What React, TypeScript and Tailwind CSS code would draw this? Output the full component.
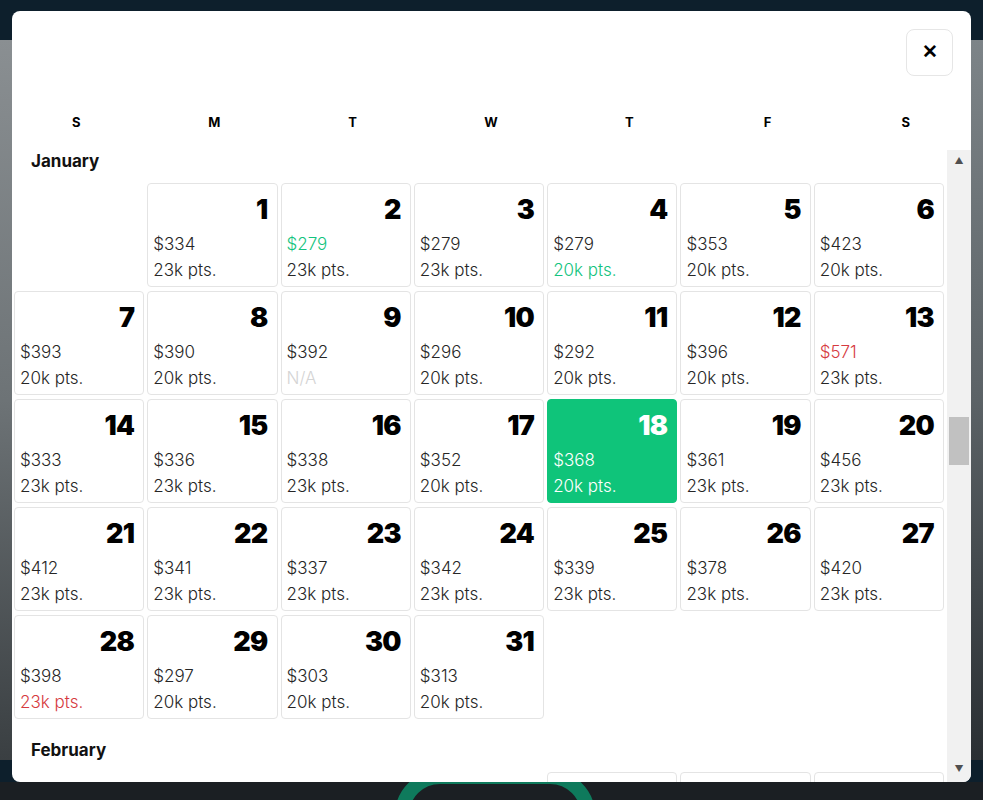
import React from "react";

type Day = {
  d: number;
  price: string;
  pts: string;
  priceTone?: "green" | "red";
  ptsTone?: "green" | "red" | "na";
  selected?: boolean;
};

const WEEKDAYS = ["S", "M", "T", "W", "T", "F", "S"];

const JANUARY: Day[] = [
  { d: 1, price: "$334", pts: "23k pts." },
  { d: 2, price: "$279", pts: "23k pts.", priceTone: "green" },
  { d: 3, price: "$279", pts: "23k pts." },
  { d: 4, price: "$279", pts: "20k pts.", ptsTone: "green" },
  { d: 5, price: "$353", pts: "20k pts." },
  { d: 6, price: "$423", pts: "20k pts." },
  { d: 7, price: "$393", pts: "20k pts." },
  { d: 8, price: "$390", pts: "20k pts." },
  { d: 9, price: "$392", pts: "N/A", ptsTone: "na" },
  { d: 10, price: "$296", pts: "20k pts." },
  { d: 11, price: "$292", pts: "20k pts." },
  { d: 12, price: "$396", pts: "20k pts." },
  { d: 13, price: "$571", pts: "23k pts.", priceTone: "red" },
  { d: 14, price: "$333", pts: "23k pts." },
  { d: 15, price: "$336", pts: "23k pts." },
  { d: 16, price: "$338", pts: "23k pts." },
  { d: 17, price: "$352", pts: "20k pts." },
  { d: 18, price: "$368", pts: "20k pts.", selected: true },
  { d: 19, price: "$361", pts: "23k pts." },
  { d: 20, price: "$456", pts: "23k pts." },
  { d: 21, price: "$412", pts: "23k pts." },
  { d: 22, price: "$341", pts: "23k pts." },
  { d: 23, price: "$337", pts: "23k pts." },
  { d: 24, price: "$342", pts: "23k pts." },
  { d: 25, price: "$339", pts: "23k pts." },
  { d: 26, price: "$378", pts: "23k pts." },
  { d: 27, price: "$420", pts: "23k pts." },
  { d: 28, price: "$398", pts: "23k pts.", ptsTone: "red" },
  { d: 29, price: "$297", pts: "20k pts." },
  { d: 30, price: "$303", pts: "20k pts." },
  { d: 31, price: "$313", pts: "20k pts." },
];

const TONE: Record<string, string> = {
  green: "text-[#13c37e]",
  red: "text-[#d63a40]",
  na: "text-[#d4d4d4]",
};

function DayCell({ day }: { day: Day }) {
  const base = day.selected
    ? "bg-[#0fc47a] border-[#0fc47a] text-white"
    : "bg-white border-[#e4e4e4] text-[#262626]";
  return (
    <div className={`h-[104px] rounded-[4px] border px-[5px] pt-[11px] ${base}`}>
      <div
        className={`pr-[4px] text-right text-[27px] font-black leading-[30px] tracking-tight ${
          day.selected ? "text-white" : "text-black"
        }`}
      >
        {day.d}
      </div>
      <div
        className={`mt-[6px] text-[17px] font-light leading-[26px] ${
          !day.selected && day.priceTone ? TONE[day.priceTone] : ""
        }`}
      >
        {day.price}
      </div>
      <div
        className={`text-[17px] font-light leading-[26px] ${
          !day.selected && day.ptsTone ? TONE[day.ptsTone] : ""
        }`}
      >
        {day.pts}
      </div>
    </div>
  );
}

function FakeScrollbar() {
  return (
    <div className="flex w-[24px] shrink-0 flex-col items-center bg-[#f1f1f1]">
      <span className="mt-[4px] text-[9px] leading-[14px] text-[#505050]">▲</span>
      <div className="mt-[249px] h-[48px] w-[20px] bg-[#c1c1c1]" />
      <div className="flex-1" />
      <span className="mb-[6px] text-[9px] leading-[14px] text-[#505050]">▼</span>
    </div>
  );
}

export default function App() {
  const lead = 1; // January starts on Monday
  return (
    <div
      className="relative h-[800px] w-[983px] overflow-hidden bg-[#0d1f2c] pt-[11px] pl-[12px]"
      style={{ fontFamily: "Inter, 'Noto Sans', sans-serif" }}
    >
      {/* backdrop bits */}
      <div className="pointer-events-none absolute left-0 top-[40px] h-[720px] w-[12px] bg-gradient-to-b from-[#8a8f92] via-[#6d7376] to-[#3a3f42]" />
      <div className="pointer-events-none absolute right-0 top-[40px] h-[720px] w-[12px] bg-gradient-to-b from-[#7d8488] via-[#5b6266] to-[#2a2f33]" />
      <div className="pointer-events-none absolute bottom-0 left-0 h-[18px] w-full bg-[#1b1f23]" />
      <div className="pointer-events-none absolute left-[395px] top-[770px] h-[90px] w-[200px] rounded-full border-[14px] border-[#0e7a5c]" />

      <div className="relative flex h-[771px] w-[959px] flex-col overflow-hidden rounded-[8px] bg-white">
        <div className="flex justify-end pr-[18px] pt-[18px]">
          <button
            type="button"
            className="flex h-[47px] w-[47px] items-center justify-center rounded-[8px] border border-[#e6e6e6] bg-white text-[19px] font-black text-black"
          >
            ✕
          </button>
        </div>

        <div className="-ml-[5px] mt-[36px] grid w-[968px] grid-cols-7">
          {WEEKDAYS.map((w, i) => (
            <div key={i} className="text-center text-[13px] font-bold leading-[20px] text-black">
              {w}
            </div>
          ))}
        </div>

        <div className="mt-[18px] flex min-h-0 flex-1">
          <div className="min-w-0 flex-1 overflow-hidden pl-[2px] pr-[3px]">
            <h2 className="pl-[17px] text-[17px] font-bold leading-[22px] text-[#111]">January</h2>
            <div className="mt-[11px] grid grid-cols-7 gap-x-[3px] gap-y-[4px]">
              {Array.from({ length: lead }).map((_, i) => (
                <div key={`e${i}`} />
              ))}
              {JANUARY.map((day) => (
                <DayCell key={day.d} day={day} />
              ))}
            </div>
            <h2 className="mt-[20px] pl-[17px] text-[17px] font-bold leading-[22px] text-[#111]">
              February
            </h2>
            <div className="mt-[11px] grid grid-cols-7 gap-x-[3px]">
              <div />
              <div />
              <div />
              <div />
              <div className="h-[104px] rounded-[4px] border border-[#e4e4e4]" />
              <div className="h-[104px] rounded-[4px] border border-[#e4e4e4]" />
              <div className="h-[104px] rounded-[4px] border border-[#e4e4e4]" />
            </div>
          </div>
          <FakeScrollbar />
        </div>
      </div>
    </div>
  );
}
